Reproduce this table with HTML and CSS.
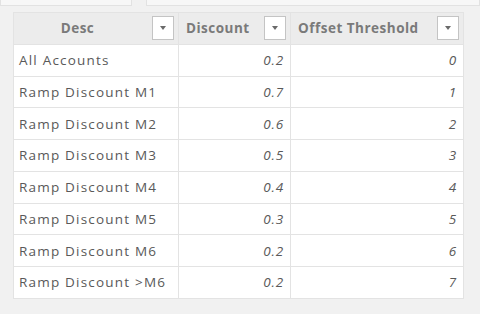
FILE: index.html
```html
<!DOCTYPE html>
<html lang="en">
<head>
    <meta charset="UTF-8">
    <meta name="viewport" content="width=device-width, initial-scale=1.0">
    <title>Discount Table</title>
    <link rel="stylesheet" href="styles.css">
</head>
<body>
    <div class="tabs">
        <div class="tab tab-left"></div>
        <div class="tab tab-right"></div>
    </div>
    <div class="container">
        <table>
            <colgroup>
                <col class="col-desc">
                <col class="col-discount">
                <col class="col-offset">
            </colgroup>
            <thead>
                <tr>
                    <th class="th-center"><span class="th-label">Desc</span><span class="filter-btn"></span></th>
                    <th><span class="th-label">Discount</span><span class="filter-btn"></span></th>
                    <th><span class="th-label">Offset Threshold</span><span class="filter-btn"></span></th>
                </tr>
            </thead>
            <tbody>
                <tr><td>All Accounts</td><td class="num">0.2</td><td class="num">0</td></tr>
                <tr><td>Ramp Discount M1</td><td class="num">0.7</td><td class="num">1</td></tr>
                <tr><td>Ramp Discount M2</td><td class="num">0.6</td><td class="num">2</td></tr>
                <tr><td>Ramp Discount M3</td><td class="num">0.5</td><td class="num">3</td></tr>
                <tr><td>Ramp Discount M4</td><td class="num">0.4</td><td class="num">4</td></tr>
                <tr><td>Ramp Discount M5</td><td class="num">0.3</td><td class="num">5</td></tr>
                <tr><td>Ramp Discount M6</td><td class="num">0.2</td><td class="num">6</td></tr>
                <tr><td>Ramp Discount &gt;M6</td><td class="num">0.2</td><td class="num">7</td></tr>
            </tbody>
        </table>
    </div>
</body>
</html>
```

FILE: styles.css
```css
body {
    font-family: "Open Sans", Arial, sans-serif;
    background-color: #f1f1f1;
    margin: 0;
    width: 480px;
    height: 314px;
    overflow: hidden;
}
.tabs {
    display: flex;
    gap: 14px;
    height: 6px;
}
.tab {
    border: 1px solid #e2e2e2;
    border-top: none;
    background-color: #f7f7f7;
}
.tab-left {
    width: 130px;
}
.tab-right {
    flex: 1;
}
.container {
    padding: 6px 0 0 13px;
}
table {
    width: 451px;
    border-collapse: collapse;
    background-color: #fff;
    table-layout: fixed;
}
.col-desc {
    width: 165px;
}
.col-discount {
    width: 112px;
}
th, td {
    box-sizing: border-box;
    border: 1px solid #e3e3e3;
    height: 31.75px;
    padding: 0 5px;
    font-size: 13.5px;
    letter-spacing: 1.2px;
    color: #595959;
    white-space: nowrap;
    overflow: hidden;
}
th {
    background-color: #ececec;
    color: #7a7a7a;
    font-weight: 700;
    letter-spacing: 0.5px;
    position: relative;
    text-align: left;
    padding-left: 7px;
    padding-right: 30px;
}
.th-center {
    text-align: center;
    padding-left: 0;
    padding-right: 37px;
}
.filter-btn {
    position: absolute;
    right: 4px;
    top: 3px;
    width: 20px;
    height: 22px;
    background-color: #fff;
    border: 1px solid #c4c4c4;
}
.filter-btn::after {
    content: "";
    position: absolute;
    left: 7px;
    top: 9px;
    border-left: 3px solid transparent;
    border-right: 3px solid transparent;
    border-top: 4px solid #6a6a6a;
}
.num {
    text-align: right;
    font-style: italic;
    letter-spacing: 0.8px;
    padding-right: 6px;
}
```
